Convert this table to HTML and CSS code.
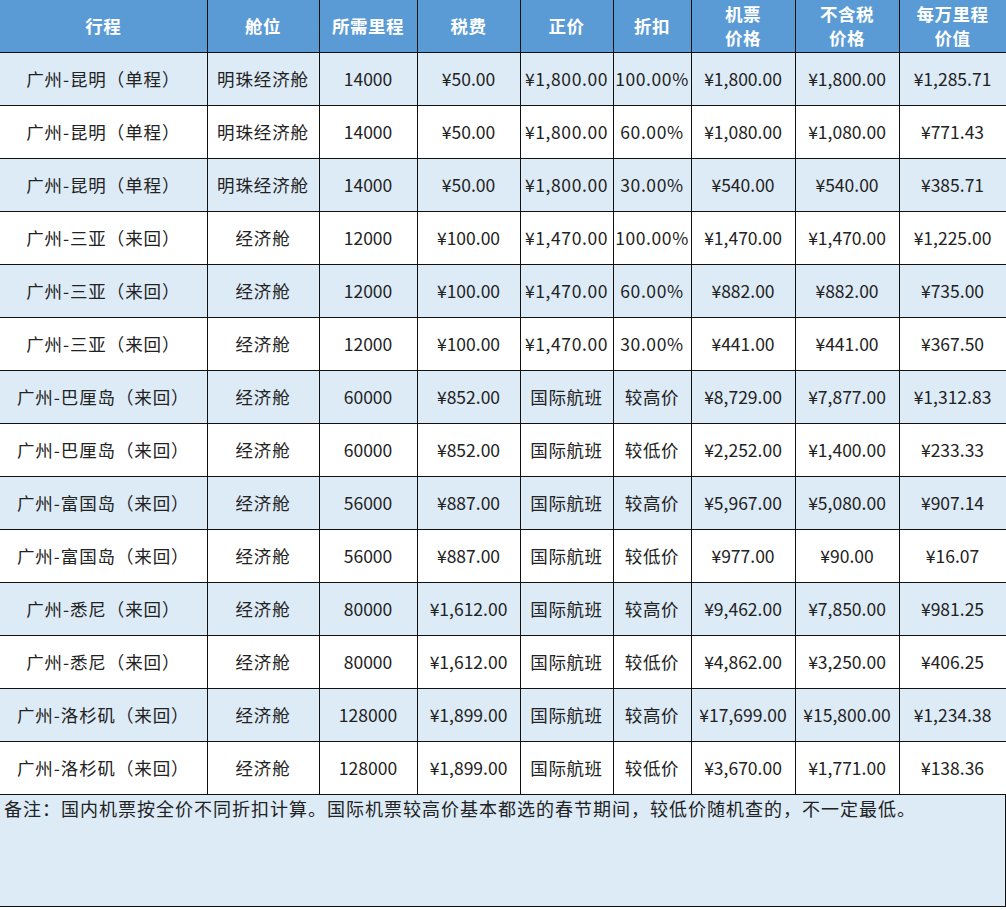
FILE: index.html
```html
<!DOCTYPE html>
<html lang="zh">
<head>
<meta charset="utf-8">
<title>里程价值</title>
<link rel="stylesheet" href="styles.css">
</head>
<body>
<div class="sheet">
<table class="grid">
<colgroup>
<col class="c1"><col class="c2"><col class="c3"><col class="c4"><col class="c5"><col class="c6"><col class="c7"><col class="c8"><col class="c9">
</colgroup>
<thead>
<tr>
<th>行程</th><th>舱位</th><th>所需里程</th><th>税费</th><th>正价</th><th>折扣</th><th>机票<br>价格</th><th>不含税<br>价格</th><th>每万里程<br>价值</th>
</tr>
</thead>
<tbody>
<tr class="alt"><td>广州-昆明（单程）</td><td>明珠经济舱</td><td>14000</td><td>¥50.00</td><td>¥1,800.00</td><td>100.00%</td><td>¥1,800.00</td><td>¥1,800.00</td><td>¥1,285.71</td></tr>
<tr><td>广州-昆明（单程）</td><td>明珠经济舱</td><td>14000</td><td>¥50.00</td><td>¥1,800.00</td><td>60.00%</td><td>¥1,080.00</td><td>¥1,080.00</td><td>¥771.43</td></tr>
<tr class="alt"><td>广州-昆明（单程）</td><td>明珠经济舱</td><td>14000</td><td>¥50.00</td><td>¥1,800.00</td><td>30.00%</td><td>¥540.00</td><td>¥540.00</td><td>¥385.71</td></tr>
<tr><td>广州-三亚（来回）</td><td>经济舱</td><td>12000</td><td>¥100.00</td><td>¥1,470.00</td><td>100.00%</td><td>¥1,470.00</td><td>¥1,470.00</td><td>¥1,225.00</td></tr>
<tr class="alt"><td>广州-三亚（来回）</td><td>经济舱</td><td>12000</td><td>¥100.00</td><td>¥1,470.00</td><td>60.00%</td><td>¥882.00</td><td>¥882.00</td><td>¥735.00</td></tr>
<tr><td>广州-三亚（来回）</td><td>经济舱</td><td>12000</td><td>¥100.00</td><td>¥1,470.00</td><td>30.00%</td><td>¥441.00</td><td>¥441.00</td><td>¥367.50</td></tr>
<tr class="alt"><td>广州-巴厘岛（来回）</td><td>经济舱</td><td>60000</td><td>¥852.00</td><td>国际航班</td><td>较高价</td><td>¥8,729.00</td><td>¥7,877.00</td><td>¥1,312.83</td></tr>
<tr><td>广州-巴厘岛（来回）</td><td>经济舱</td><td>60000</td><td>¥852.00</td><td>国际航班</td><td>较低价</td><td>¥2,252.00</td><td>¥1,400.00</td><td>¥233.33</td></tr>
<tr class="alt"><td>广州-富国岛（来回）</td><td>经济舱</td><td>56000</td><td>¥887.00</td><td>国际航班</td><td>较高价</td><td>¥5,967.00</td><td>¥5,080.00</td><td>¥907.14</td></tr>
<tr><td>广州-富国岛（来回）</td><td>经济舱</td><td>56000</td><td>¥887.00</td><td>国际航班</td><td>较低价</td><td>¥977.00</td><td>¥90.00</td><td>¥16.07</td></tr>
<tr class="alt"><td>广州-悉尼（来回）</td><td>经济舱</td><td>80000</td><td>¥1,612.00</td><td>国际航班</td><td>较高价</td><td>¥9,462.00</td><td>¥7,850.00</td><td>¥981.25</td></tr>
<tr><td>广州-悉尼（来回）</td><td>经济舱</td><td>80000</td><td>¥1,612.00</td><td>国际航班</td><td>较低价</td><td>¥4,862.00</td><td>¥3,250.00</td><td>¥406.25</td></tr>
<tr class="alt"><td>广州-洛杉矶（来回）</td><td>经济舱</td><td>128000</td><td>¥1,899.00</td><td>国际航班</td><td>较高价</td><td>¥17,699.00</td><td>¥15,800.00</td><td>¥1,234.38</td></tr>
<tr><td>广州-洛杉矶（来回）</td><td>经济舱</td><td>128000</td><td>¥1,899.00</td><td>国际航班</td><td>较低价</td><td>¥3,670.00</td><td>¥1,771.00</td><td>¥138.36</td></tr>
</tbody>
</table>
<div class="note">备注：国内机票按全价不同折扣计算。国际机票较高价基本都选的春节期间，较低价随机查的，不一定最低。</div>
</div>
</body>
</html>
```
FILE: styles.css
```css
html, body {
  margin: 0;
  padding: 0;
  background: #ffffff;
}
.sheet {
  width: 1006px;
  font-family: "Noto Sans CJK SC", "Microsoft YaHei", sans-serif;
  color: #222;
}
.grid {
  border-collapse: collapse;
  table-layout: fixed;
  width: 1006px;
}
.c1 { width: 207px; }
.c2 { width: 112px; }
.c3 { width: 98px; }
.c4 { width: 103px; }
.c5 { width: 93px; }
.c6 { width: 78px; }
.c7 { width: 104px; }
.c8 { width: 104px; }
.c9 { width: 107px; }
.grid th, .grid td {
  border: 1px solid #111;
  padding: 0;
  text-align: center;
  vertical-align: middle;
  white-space: nowrap;
  overflow: hidden;
  font-size: 17.5px;
  height: 52px;
}
.grid tr > :first-child { border-left: none; }
.grid thead tr > * { border-top: none; }
.grid th {
  background: #5b9bd5;
  color: #ffffff;
  font-weight: bold;
  line-height: 24px;
  letter-spacing: 0.5px;
}
.grid td {
  line-height: 22px;
  letter-spacing: 0;
}
.grid td:nth-child(1),
.grid td:nth-child(2) {
  letter-spacing: 0.9px;
}
.grid td:nth-child(5),
.grid td:nth-child(6) {
  letter-spacing: 0.6px;
}
.grid tr.alt td {
  background: #ddebf7;
}
.note {
  background: #ddebf7;
  height: 112px;
  box-sizing: border-box;
  border-right: 1px solid #111;
  border-bottom: 1px solid #111;
  font-size: 18px;
  line-height: 26px;
  padding-left: 4px;
  letter-spacing: 1px;
}
```
